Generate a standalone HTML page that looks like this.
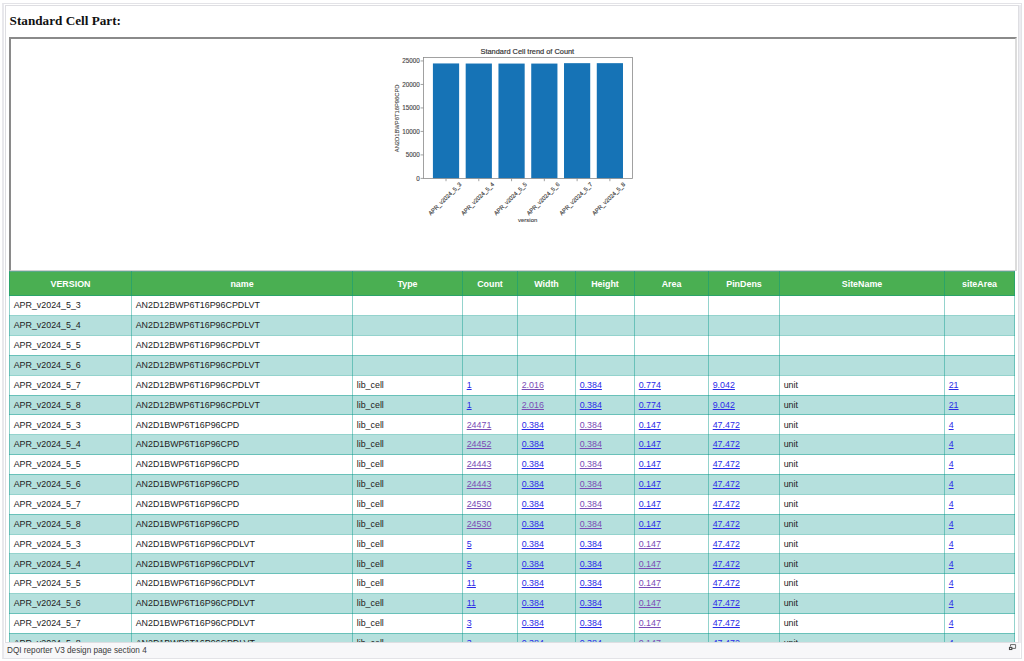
<!DOCTYPE html>
<html><head><meta charset="utf-8"><title>DQI reporter V3 design page section 4</title>
<style>
html,body{margin:0;padding:0;background:#fff;width:1024px;height:661px;overflow:hidden;position:relative;font-family:"Liberation Sans", sans-serif;}
.a{position:absolute;}
.t{position:absolute;white-space:nowrap;font-size:8.9px;line-height:1;color:#222;}
.h{position:absolute;white-space:nowrap;font-size:8.9px;line-height:1;color:#fff;font-weight:bold;}
.b{color:#2b2be8;text-decoration:underline;}
.p{color:#7a4cb6;text-decoration:underline;}
.ct{position:absolute;white-space:nowrap;font-size:6px;line-height:1;color:#333;}
</style></head><body>
<div class="a" style="left:2px;top:3px;width:1017px;height:654px;border:1px solid #e3e3e7;border-left:2px solid #e8e8ec;"></div>
<div class="a" style="left:1019px;top:5px;width:2px;height:638px;background:#ececf0;"></div>
<div class="a" style="left:5px;top:5px;width:1012px;height:636px;border:1px solid #dedee2;"></div>
<div class="a" style="left:4px;top:643px;width:1016px;height:15px;background:#f7f7f9;"></div>
<div class="a" style="left:7px;top:645.5px;font-size:8.2px;line-height:10px;color:#3a3a3a;white-space:nowrap;">DQI reporter V3 design page section 4</div>
<svg class="a" style="left:1007px;top:643px" width="12" height="9" viewBox="0 0 12 9"><path d="M3.5 3.5 V1.6 H8.6 V5.4 H5" fill="none" stroke="#6a6a6a" stroke-width="1"/><rect x="2.5" y="4.4" width="2.3" height="2.1" fill="#fff" stroke="#444" stroke-width="1.1"/></svg>
<div class="a" style="left:6px;top:6px;width:1012px;height:636px;overflow:hidden;">
<div class="a" style="left:3.6px;top:7.6px;font-family:'Liberation Serif',serif;font-weight:bold;font-size:13.2px;line-height:1;white-space:nowrap;color:#111;">Standard Cell Part:</div>
<div class="a" style="left:3px;top:31px;width:1004px;height:231px;border-style:solid;border-width:2px 2px 1px 2px;border-color:#8a8a8a #dcdcdc #d0d0d0 #8a8a8a;"></div>
<svg class="a" style="left:374px;top:34px" width="270" height="195" viewBox="380 40 270 195"><rect x="432.91" y="63.44" width="26.21" height="114.96" fill="#1673b6"/><rect x="465.68" y="63.53" width="26.21" height="114.87" fill="#1673b6"/><rect x="498.46" y="63.57" width="26.21" height="114.83" fill="#1673b6"/><rect x="531.23" y="63.57" width="26.21" height="114.83" fill="#1673b6"/><rect x="564.01" y="63.16" width="26.21" height="115.24" fill="#1673b6"/><rect x="596.78" y="63.16" width="26.21" height="115.24" fill="#1673b6"/><rect x="423.4" y="57.4" width="209.10" height="121.00" fill="none" stroke="#8a8a8a" stroke-width="0.8"/><line x1="420.59999999999997" y1="178.40" x2="423.4" y2="178.40" stroke="#8a8a8a" stroke-width="0.8"/><text x="419.79999999999995" y="180.80" font-size="6.3" text-anchor="end" fill="#444" stroke="#444" stroke-width="0.12" font-family="Liberation Sans">0</text><line x1="420.59999999999997" y1="154.91" x2="423.4" y2="154.91" stroke="#8a8a8a" stroke-width="0.8"/><text x="419.79999999999995" y="157.31" font-size="6.3" text-anchor="end" fill="#444" stroke="#444" stroke-width="0.12" font-family="Liberation Sans">5000</text><line x1="420.59999999999997" y1="131.42" x2="423.4" y2="131.42" stroke="#8a8a8a" stroke-width="0.8"/><text x="419.79999999999995" y="133.82" font-size="6.3" text-anchor="end" fill="#444" stroke="#444" stroke-width="0.12" font-family="Liberation Sans">10000</text><line x1="420.59999999999997" y1="107.93" x2="423.4" y2="107.93" stroke="#8a8a8a" stroke-width="0.8"/><text x="419.79999999999995" y="110.33" font-size="6.3" text-anchor="end" fill="#444" stroke="#444" stroke-width="0.12" font-family="Liberation Sans">15000</text><line x1="420.59999999999997" y1="84.44" x2="423.4" y2="84.44" stroke="#8a8a8a" stroke-width="0.8"/><text x="419.79999999999995" y="86.84" font-size="6.3" text-anchor="end" fill="#444" stroke="#444" stroke-width="0.12" font-family="Liberation Sans">20000</text><line x1="420.59999999999997" y1="60.95" x2="423.4" y2="60.95" stroke="#8a8a8a" stroke-width="0.8"/><text x="419.79999999999995" y="63.35" font-size="6.3" text-anchor="end" fill="#444" stroke="#444" stroke-width="0.12" font-family="Liberation Sans">25000</text><line x1="446.01" y1="178.4" x2="446.01" y2="181.20000000000002" stroke="#8a8a8a" stroke-width="0.8"/><text transform="translate(444.81,198.90) rotate(-45)" font-size="5.8" text-anchor="middle" fill="#444" stroke="#444" stroke-width="0.15" font-family="Liberation Sans" dy="2">APR_v2024_5_3</text><line x1="478.79" y1="178.4" x2="478.79" y2="181.20000000000002" stroke="#8a8a8a" stroke-width="0.8"/><text transform="translate(477.59,198.90) rotate(-45)" font-size="5.8" text-anchor="middle" fill="#444" stroke="#444" stroke-width="0.15" font-family="Liberation Sans" dy="2">APR_v2024_5_4</text><line x1="511.56" y1="178.4" x2="511.56" y2="181.20000000000002" stroke="#8a8a8a" stroke-width="0.8"/><text transform="translate(510.36,198.90) rotate(-45)" font-size="5.8" text-anchor="middle" fill="#444" stroke="#444" stroke-width="0.15" font-family="Liberation Sans" dy="2">APR_v2024_5_5</text><line x1="544.34" y1="178.4" x2="544.34" y2="181.20000000000002" stroke="#8a8a8a" stroke-width="0.8"/><text transform="translate(543.14,198.90) rotate(-45)" font-size="5.8" text-anchor="middle" fill="#444" stroke="#444" stroke-width="0.15" font-family="Liberation Sans" dy="2">APR_v2024_5_6</text><line x1="577.11" y1="178.4" x2="577.11" y2="181.20000000000002" stroke="#8a8a8a" stroke-width="0.8"/><text transform="translate(575.91,198.90) rotate(-45)" font-size="5.8" text-anchor="middle" fill="#444" stroke="#444" stroke-width="0.15" font-family="Liberation Sans" dy="2">APR_v2024_5_7</text><line x1="609.89" y1="178.4" x2="609.89" y2="181.20000000000002" stroke="#8a8a8a" stroke-width="0.8"/><text transform="translate(608.69,198.90) rotate(-45)" font-size="5.8" text-anchor="middle" fill="#444" stroke="#444" stroke-width="0.15" font-family="Liberation Sans" dy="2">APR_v2024_5_8</text><text x="527.35" y="54.4" font-size="7.4" text-anchor="middle" fill="#333" stroke="#333" stroke-width="0.18" font-family="Liberation Sans">Standard Cell trend of Count</text><text x="527.7" y="222.0" font-size="6" text-anchor="middle" fill="#444" stroke="#444" stroke-width="0.12" font-family="Liberation Sans">version</text><text transform="translate(399.2,118.4) rotate(-90)" font-size="5.8" text-anchor="middle" fill="#444" stroke="#444" stroke-width="0.12" font-family="Liberation Sans">AN2D1BWP6T16P96CPD</text></svg>
<div class="a" style="left:3px;top:265px;width:1006.00px;height:24.75px;background:#4aaf52;"></div>
<div class="a" style="left:3px;top:289.75px;width:1006.00px;height:19.86px;background:#ffffff;"></div>
<div class="a" style="left:3px;top:309.61px;width:1006.00px;height:19.86px;background:#b5e0dd;"></div>
<div class="a" style="left:3px;top:329.47px;width:1006.00px;height:19.86px;background:#ffffff;"></div>
<div class="a" style="left:3px;top:349.33px;width:1006.00px;height:19.86px;background:#b5e0dd;"></div>
<div class="a" style="left:3px;top:369.19px;width:1006.00px;height:19.86px;background:#ffffff;"></div>
<div class="a" style="left:3px;top:389.05px;width:1006.00px;height:19.86px;background:#b5e0dd;"></div>
<div class="a" style="left:3px;top:408.91px;width:1006.00px;height:19.86px;background:#ffffff;"></div>
<div class="a" style="left:3px;top:428.77px;width:1006.00px;height:19.86px;background:#b5e0dd;"></div>
<div class="a" style="left:3px;top:448.63px;width:1006.00px;height:19.86px;background:#ffffff;"></div>
<div class="a" style="left:3px;top:468.49px;width:1006.00px;height:19.86px;background:#b5e0dd;"></div>
<div class="a" style="left:3px;top:488.35px;width:1006.00px;height:19.86px;background:#ffffff;"></div>
<div class="a" style="left:3px;top:508.21px;width:1006.00px;height:19.86px;background:#b5e0dd;"></div>
<div class="a" style="left:3px;top:528.07px;width:1006.00px;height:19.86px;background:#ffffff;"></div>
<div class="a" style="left:3px;top:547.93px;width:1006.00px;height:19.86px;background:#b5e0dd;"></div>
<div class="a" style="left:3px;top:567.79px;width:1006.00px;height:19.86px;background:#ffffff;"></div>
<div class="a" style="left:3px;top:587.65px;width:1006.00px;height:19.86px;background:#b5e0dd;"></div>
<div class="a" style="left:3px;top:607.51px;width:1006.00px;height:19.86px;background:#ffffff;"></div>
<div class="a" style="left:3px;top:627.37px;width:1006.00px;height:19.86px;background:#b5e0dd;"></div>
<div class="a" style="left:3px;top:289.25px;width:1006.00px;height:1px;background:rgba(0,150,136,0.42);"></div>
<div class="a" style="left:3px;top:309.11px;width:1006.00px;height:1px;background:rgba(0,150,136,0.42);"></div>
<div class="a" style="left:3px;top:328.97px;width:1006.00px;height:1px;background:rgba(0,150,136,0.42);"></div>
<div class="a" style="left:3px;top:348.83px;width:1006.00px;height:1px;background:rgba(0,150,136,0.42);"></div>
<div class="a" style="left:3px;top:368.69px;width:1006.00px;height:1px;background:rgba(0,150,136,0.42);"></div>
<div class="a" style="left:3px;top:388.55px;width:1006.00px;height:1px;background:rgba(0,150,136,0.42);"></div>
<div class="a" style="left:3px;top:408.41px;width:1006.00px;height:1px;background:rgba(0,150,136,0.42);"></div>
<div class="a" style="left:3px;top:428.27px;width:1006.00px;height:1px;background:rgba(0,150,136,0.42);"></div>
<div class="a" style="left:3px;top:448.13px;width:1006.00px;height:1px;background:rgba(0,150,136,0.42);"></div>
<div class="a" style="left:3px;top:467.99px;width:1006.00px;height:1px;background:rgba(0,150,136,0.42);"></div>
<div class="a" style="left:3px;top:487.85px;width:1006.00px;height:1px;background:rgba(0,150,136,0.42);"></div>
<div class="a" style="left:3px;top:507.71px;width:1006.00px;height:1px;background:rgba(0,150,136,0.42);"></div>
<div class="a" style="left:3px;top:527.57px;width:1006.00px;height:1px;background:rgba(0,150,136,0.42);"></div>
<div class="a" style="left:3px;top:547.43px;width:1006.00px;height:1px;background:rgba(0,150,136,0.42);"></div>
<div class="a" style="left:3px;top:567.29px;width:1006.00px;height:1px;background:rgba(0,150,136,0.42);"></div>
<div class="a" style="left:3px;top:587.15px;width:1006.00px;height:1px;background:rgba(0,150,136,0.42);"></div>
<div class="a" style="left:3px;top:607.01px;width:1006.00px;height:1px;background:rgba(0,150,136,0.42);"></div>
<div class="a" style="left:3px;top:626.87px;width:1006.00px;height:1px;background:rgba(0,150,136,0.42);"></div>
<div class="a" style="left:3px;top:646.73px;width:1006.00px;height:1px;background:rgba(0,150,136,0.42);"></div>
<div class="a" style="left:3px;top:265.00px;width:1006.00px;height:1px;background:#5aa88a;"></div>
<div class="a" style="left:3.00px;top:265.00px;width:1px;height:382.23px;background:rgba(0,150,136,0.42);"></div>
<div class="a" style="left:125.00px;top:265.00px;width:1px;height:382.23px;background:rgba(0,150,136,0.42);"></div>
<div class="a" style="left:346.00px;top:265.00px;width:1px;height:382.23px;background:rgba(0,150,136,0.42);"></div>
<div class="a" style="left:456.00px;top:265.00px;width:1px;height:382.23px;background:rgba(0,150,136,0.42);"></div>
<div class="a" style="left:511.00px;top:265.00px;width:1px;height:382.23px;background:rgba(0,150,136,0.42);"></div>
<div class="a" style="left:569.00px;top:265.00px;width:1px;height:382.23px;background:rgba(0,150,136,0.42);"></div>
<div class="a" style="left:628.00px;top:265.00px;width:1px;height:382.23px;background:rgba(0,150,136,0.42);"></div>
<div class="a" style="left:702.00px;top:265.00px;width:1px;height:382.23px;background:rgba(0,150,136,0.42);"></div>
<div class="a" style="left:773.00px;top:265.00px;width:1px;height:382.23px;background:rgba(0,150,136,0.42);"></div>
<div class="a" style="left:938.00px;top:265.00px;width:1px;height:382.23px;background:rgba(0,150,136,0.42);"></div>
<div class="a" style="left:1008.00px;top:265.00px;width:1px;height:382.23px;background:rgba(0,150,136,0.42);"></div>
<div class="h" style="left:3.50px;width:122.00px;text-align:center;top:273.90px;">VERSION</div>
<div class="h" style="left:125.50px;width:221.00px;text-align:center;top:273.90px;">name</div>
<div class="h" style="left:346.50px;width:110.00px;text-align:center;top:273.90px;">Type</div>
<div class="h" style="left:456.50px;width:55.00px;text-align:center;top:273.90px;">Count</div>
<div class="h" style="left:511.50px;width:58.00px;text-align:center;top:273.90px;">Width</div>
<div class="h" style="left:569.50px;width:59.00px;text-align:center;top:273.90px;">Height</div>
<div class="h" style="left:628.50px;width:74.00px;text-align:center;top:273.90px;">Area</div>
<div class="h" style="left:702.50px;width:71.00px;text-align:center;top:273.90px;">PinDens</div>
<div class="h" style="left:773.50px;width:165.00px;text-align:center;top:273.90px;">SiteName</div>
<div class="h" style="left:938.50px;width:70.00px;text-align:center;top:273.90px;">siteArea</div>
<div class="t" style="left:7.70px;top:295.45px;">APR_v2024_5_3</div>
<div class="t" style="left:129.70px;top:295.45px;">AN2D12BWP6T16P96CPDLVT</div>
<div class="t" style="left:7.70px;top:315.31px;">APR_v2024_5_4</div>
<div class="t" style="left:129.70px;top:315.31px;">AN2D12BWP6T16P96CPDLVT</div>
<div class="t" style="left:7.70px;top:335.17px;">APR_v2024_5_5</div>
<div class="t" style="left:129.70px;top:335.17px;">AN2D12BWP6T16P96CPDLVT</div>
<div class="t" style="left:7.70px;top:355.03px;">APR_v2024_5_6</div>
<div class="t" style="left:129.70px;top:355.03px;">AN2D12BWP6T16P96CPDLVT</div>
<div class="t" style="left:7.70px;top:374.89px;">APR_v2024_5_7</div>
<div class="t" style="left:129.70px;top:374.89px;">AN2D12BWP6T16P96CPDLVT</div>
<div class="t" style="left:350.70px;top:374.89px;">lib_cell</div>
<div class="t" style="left:460.70px;top:374.89px;"><span class="b">1</span></div>
<div class="t" style="left:515.70px;top:374.89px;"><span class="p">2.016</span></div>
<div class="t" style="left:573.70px;top:374.89px;"><span class="b">0.384</span></div>
<div class="t" style="left:632.70px;top:374.89px;"><span class="b">0.774</span></div>
<div class="t" style="left:706.70px;top:374.89px;"><span class="b">9.042</span></div>
<div class="t" style="left:777.70px;top:374.89px;">unit</div>
<div class="t" style="left:942.70px;top:374.89px;"><span class="b">21</span></div>
<div class="t" style="left:7.70px;top:394.75px;">APR_v2024_5_8</div>
<div class="t" style="left:129.70px;top:394.75px;">AN2D12BWP6T16P96CPDLVT</div>
<div class="t" style="left:350.70px;top:394.75px;">lib_cell</div>
<div class="t" style="left:460.70px;top:394.75px;"><span class="b">1</span></div>
<div class="t" style="left:515.70px;top:394.75px;"><span class="p">2.016</span></div>
<div class="t" style="left:573.70px;top:394.75px;"><span class="b">0.384</span></div>
<div class="t" style="left:632.70px;top:394.75px;"><span class="b">0.774</span></div>
<div class="t" style="left:706.70px;top:394.75px;"><span class="b">9.042</span></div>
<div class="t" style="left:777.70px;top:394.75px;">unit</div>
<div class="t" style="left:942.70px;top:394.75px;"><span class="b">21</span></div>
<div class="t" style="left:7.70px;top:414.61px;">APR_v2024_5_3</div>
<div class="t" style="left:129.70px;top:414.61px;">AN2D1BWP6T16P96CPD</div>
<div class="t" style="left:350.70px;top:414.61px;">lib_cell</div>
<div class="t" style="left:460.70px;top:414.61px;"><span class="p">24471</span></div>
<div class="t" style="left:515.70px;top:414.61px;"><span class="b">0.384</span></div>
<div class="t" style="left:573.70px;top:414.61px;"><span class="p">0.384</span></div>
<div class="t" style="left:632.70px;top:414.61px;"><span class="b">0.147</span></div>
<div class="t" style="left:706.70px;top:414.61px;"><span class="b">47.472</span></div>
<div class="t" style="left:777.70px;top:414.61px;">unit</div>
<div class="t" style="left:942.70px;top:414.61px;"><span class="b">4</span></div>
<div class="t" style="left:7.70px;top:434.47px;">APR_v2024_5_4</div>
<div class="t" style="left:129.70px;top:434.47px;">AN2D1BWP6T16P96CPD</div>
<div class="t" style="left:350.70px;top:434.47px;">lib_cell</div>
<div class="t" style="left:460.70px;top:434.47px;"><span class="p">24452</span></div>
<div class="t" style="left:515.70px;top:434.47px;"><span class="b">0.384</span></div>
<div class="t" style="left:573.70px;top:434.47px;"><span class="p">0.384</span></div>
<div class="t" style="left:632.70px;top:434.47px;"><span class="b">0.147</span></div>
<div class="t" style="left:706.70px;top:434.47px;"><span class="b">47.472</span></div>
<div class="t" style="left:777.70px;top:434.47px;">unit</div>
<div class="t" style="left:942.70px;top:434.47px;"><span class="b">4</span></div>
<div class="t" style="left:7.70px;top:454.33px;">APR_v2024_5_5</div>
<div class="t" style="left:129.70px;top:454.33px;">AN2D1BWP6T16P96CPD</div>
<div class="t" style="left:350.70px;top:454.33px;">lib_cell</div>
<div class="t" style="left:460.70px;top:454.33px;"><span class="p">24443</span></div>
<div class="t" style="left:515.70px;top:454.33px;"><span class="b">0.384</span></div>
<div class="t" style="left:573.70px;top:454.33px;"><span class="p">0.384</span></div>
<div class="t" style="left:632.70px;top:454.33px;"><span class="b">0.147</span></div>
<div class="t" style="left:706.70px;top:454.33px;"><span class="b">47.472</span></div>
<div class="t" style="left:777.70px;top:454.33px;">unit</div>
<div class="t" style="left:942.70px;top:454.33px;"><span class="b">4</span></div>
<div class="t" style="left:7.70px;top:474.19px;">APR_v2024_5_6</div>
<div class="t" style="left:129.70px;top:474.19px;">AN2D1BWP6T16P96CPD</div>
<div class="t" style="left:350.70px;top:474.19px;">lib_cell</div>
<div class="t" style="left:460.70px;top:474.19px;"><span class="p">24443</span></div>
<div class="t" style="left:515.70px;top:474.19px;"><span class="b">0.384</span></div>
<div class="t" style="left:573.70px;top:474.19px;"><span class="p">0.384</span></div>
<div class="t" style="left:632.70px;top:474.19px;"><span class="b">0.147</span></div>
<div class="t" style="left:706.70px;top:474.19px;"><span class="b">47.472</span></div>
<div class="t" style="left:777.70px;top:474.19px;">unit</div>
<div class="t" style="left:942.70px;top:474.19px;"><span class="b">4</span></div>
<div class="t" style="left:7.70px;top:494.05px;">APR_v2024_5_7</div>
<div class="t" style="left:129.70px;top:494.05px;">AN2D1BWP6T16P96CPD</div>
<div class="t" style="left:350.70px;top:494.05px;">lib_cell</div>
<div class="t" style="left:460.70px;top:494.05px;"><span class="p">24530</span></div>
<div class="t" style="left:515.70px;top:494.05px;"><span class="b">0.384</span></div>
<div class="t" style="left:573.70px;top:494.05px;"><span class="p">0.384</span></div>
<div class="t" style="left:632.70px;top:494.05px;"><span class="b">0.147</span></div>
<div class="t" style="left:706.70px;top:494.05px;"><span class="b">47.472</span></div>
<div class="t" style="left:777.70px;top:494.05px;">unit</div>
<div class="t" style="left:942.70px;top:494.05px;"><span class="b">4</span></div>
<div class="t" style="left:7.70px;top:513.91px;">APR_v2024_5_8</div>
<div class="t" style="left:129.70px;top:513.91px;">AN2D1BWP6T16P96CPD</div>
<div class="t" style="left:350.70px;top:513.91px;">lib_cell</div>
<div class="t" style="left:460.70px;top:513.91px;"><span class="p">24530</span></div>
<div class="t" style="left:515.70px;top:513.91px;"><span class="b">0.384</span></div>
<div class="t" style="left:573.70px;top:513.91px;"><span class="p">0.384</span></div>
<div class="t" style="left:632.70px;top:513.91px;"><span class="b">0.147</span></div>
<div class="t" style="left:706.70px;top:513.91px;"><span class="b">47.472</span></div>
<div class="t" style="left:777.70px;top:513.91px;">unit</div>
<div class="t" style="left:942.70px;top:513.91px;"><span class="b">4</span></div>
<div class="t" style="left:7.70px;top:533.77px;">APR_v2024_5_3</div>
<div class="t" style="left:129.70px;top:533.77px;">AN2D1BWP6T16P96CPDLVT</div>
<div class="t" style="left:350.70px;top:533.77px;">lib_cell</div>
<div class="t" style="left:460.70px;top:533.77px;"><span class="b">5</span></div>
<div class="t" style="left:515.70px;top:533.77px;"><span class="b">0.384</span></div>
<div class="t" style="left:573.70px;top:533.77px;"><span class="b">0.384</span></div>
<div class="t" style="left:632.70px;top:533.77px;"><span class="p">0.147</span></div>
<div class="t" style="left:706.70px;top:533.77px;"><span class="b">47.472</span></div>
<div class="t" style="left:777.70px;top:533.77px;">unit</div>
<div class="t" style="left:942.70px;top:533.77px;"><span class="b">4</span></div>
<div class="t" style="left:7.70px;top:553.63px;">APR_v2024_5_4</div>
<div class="t" style="left:129.70px;top:553.63px;">AN2D1BWP6T16P96CPDLVT</div>
<div class="t" style="left:350.70px;top:553.63px;">lib_cell</div>
<div class="t" style="left:460.70px;top:553.63px;"><span class="b">5</span></div>
<div class="t" style="left:515.70px;top:553.63px;"><span class="b">0.384</span></div>
<div class="t" style="left:573.70px;top:553.63px;"><span class="b">0.384</span></div>
<div class="t" style="left:632.70px;top:553.63px;"><span class="p">0.147</span></div>
<div class="t" style="left:706.70px;top:553.63px;"><span class="b">47.472</span></div>
<div class="t" style="left:777.70px;top:553.63px;">unit</div>
<div class="t" style="left:942.70px;top:553.63px;"><span class="b">4</span></div>
<div class="t" style="left:7.70px;top:573.49px;">APR_v2024_5_5</div>
<div class="t" style="left:129.70px;top:573.49px;">AN2D1BWP6T16P96CPDLVT</div>
<div class="t" style="left:350.70px;top:573.49px;">lib_cell</div>
<div class="t" style="left:460.70px;top:573.49px;"><span class="b">11</span></div>
<div class="t" style="left:515.70px;top:573.49px;"><span class="b">0.384</span></div>
<div class="t" style="left:573.70px;top:573.49px;"><span class="b">0.384</span></div>
<div class="t" style="left:632.70px;top:573.49px;"><span class="p">0.147</span></div>
<div class="t" style="left:706.70px;top:573.49px;"><span class="b">47.472</span></div>
<div class="t" style="left:777.70px;top:573.49px;">unit</div>
<div class="t" style="left:942.70px;top:573.49px;"><span class="b">4</span></div>
<div class="t" style="left:7.70px;top:593.35px;">APR_v2024_5_6</div>
<div class="t" style="left:129.70px;top:593.35px;">AN2D1BWP6T16P96CPDLVT</div>
<div class="t" style="left:350.70px;top:593.35px;">lib_cell</div>
<div class="t" style="left:460.70px;top:593.35px;"><span class="b">11</span></div>
<div class="t" style="left:515.70px;top:593.35px;"><span class="b">0.384</span></div>
<div class="t" style="left:573.70px;top:593.35px;"><span class="b">0.384</span></div>
<div class="t" style="left:632.70px;top:593.35px;"><span class="p">0.147</span></div>
<div class="t" style="left:706.70px;top:593.35px;"><span class="b">47.472</span></div>
<div class="t" style="left:777.70px;top:593.35px;">unit</div>
<div class="t" style="left:942.70px;top:593.35px;"><span class="b">4</span></div>
<div class="t" style="left:7.70px;top:613.21px;">APR_v2024_5_7</div>
<div class="t" style="left:129.70px;top:613.21px;">AN2D1BWP6T16P96CPDLVT</div>
<div class="t" style="left:350.70px;top:613.21px;">lib_cell</div>
<div class="t" style="left:460.70px;top:613.21px;"><span class="b">3</span></div>
<div class="t" style="left:515.70px;top:613.21px;"><span class="b">0.384</span></div>
<div class="t" style="left:573.70px;top:613.21px;"><span class="b">0.384</span></div>
<div class="t" style="left:632.70px;top:613.21px;"><span class="p">0.147</span></div>
<div class="t" style="left:706.70px;top:613.21px;"><span class="b">47.472</span></div>
<div class="t" style="left:777.70px;top:613.21px;">unit</div>
<div class="t" style="left:942.70px;top:613.21px;"><span class="b">4</span></div>
<div class="t" style="left:7.70px;top:633.07px;">APR_v2024_5_8</div>
<div class="t" style="left:129.70px;top:633.07px;">AN2D1BWP6T16P96CPDLVT</div>
<div class="t" style="left:350.70px;top:633.07px;">lib_cell</div>
<div class="t" style="left:460.70px;top:633.07px;"><span class="b">3</span></div>
<div class="t" style="left:515.70px;top:633.07px;"><span class="b">0.384</span></div>
<div class="t" style="left:573.70px;top:633.07px;"><span class="b">0.384</span></div>
<div class="t" style="left:632.70px;top:633.07px;"><span class="p">0.147</span></div>
<div class="t" style="left:706.70px;top:633.07px;"><span class="b">47.472</span></div>
<div class="t" style="left:777.70px;top:633.07px;">unit</div>
<div class="t" style="left:942.70px;top:633.07px;"><span class="b">4</span></div>
</div>
</body></html>
